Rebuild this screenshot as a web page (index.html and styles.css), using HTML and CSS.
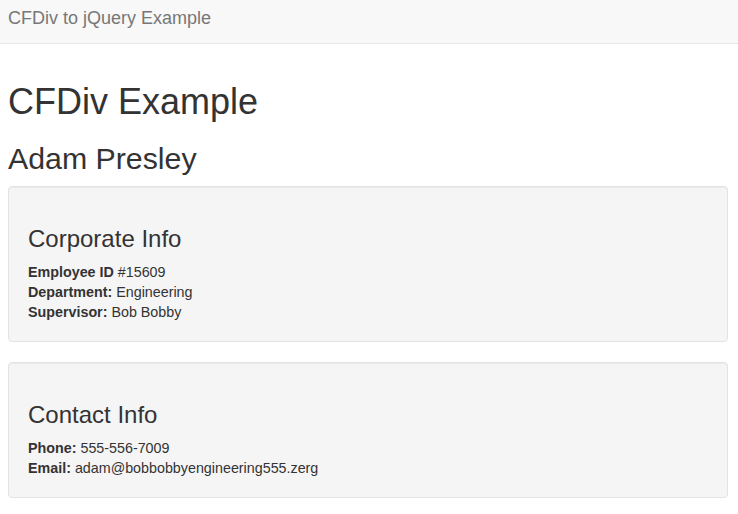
FILE: index.html
```html
<!DOCTYPE html>
<html lang="en">
<head>
<meta charset="utf-8">
<title>CFDiv to jQuery Example</title>
<link rel="stylesheet" href="styles.css">
</head>
<body>
<nav class="navbar">
  <span class="brand">CFDiv to jQuery Example</span>
</nav>
<main class="container">
  <h1 class="title">CFDiv Example</h1>
  <h2 class="name">Adam Presley</h2>
  <section class="well">
    <h3 class="well-title">Corporate Info</h3>
    <div class="line"><strong>Employee ID</strong> #15609</div>
    <div class="line"><strong>Department:</strong> Engineering</div>
    <div class="line"><strong>Supervisor:</strong> Bob Bobby</div>
  </section>
  <section class="well">
    <h3 class="well-title">Contact Info</h3>
    <div class="line"><strong>Phone:</strong> 555-556-7009</div>
    <div class="line"><strong>Email:</strong> adam@bobbobbyengineering555.zerg</div>
  </section>
</main>
</body>
</html>
```
FILE: styles.css
```css
* { box-sizing: border-box; }
html, body { margin: 0; padding: 0; }
body {
  font-family: "Liberation Sans", Arial, Helvetica, sans-serif;
  font-size: 14px;
  line-height: 20px;
  color: #333;
  background: #fff;
}
.navbar {
  height: 44px;
  background: #f8f8f8;
  border-bottom: 1px solid #e7e7e7;
  padding: 8px 8px 0;
}
.brand {
  display: block;
  font-size: 18px;
  line-height: 20px;
  color: #777;
}
.container {
  padding: 18px 10px 0 8px;
}
.title {
  margin: 20px 0 10px;
  font-size: 36px;
  line-height: 39.6px;
  font-weight: 500;
}
.name {
  margin: 20px 0 11px;
  font-size: 30.3px;
  line-height: 33px;
  font-weight: 500;
}
.well {
  background: #f5f5f5;
  border: 1px solid #e3e3e3;
  border-radius: 4px;
  box-shadow: inset 0 1px 1px rgba(0,0,0,.05);
  padding: 19px;
  margin-bottom: 20px;
}
.well-title {
  margin: 20px 0 10px;
  font-size: 24px;
  line-height: 26.4px;
  font-weight: 500;
}
.line {
  font-size: 14.3px;
  line-height: 20px;
}
.line strong { font-weight: 700; }
```
